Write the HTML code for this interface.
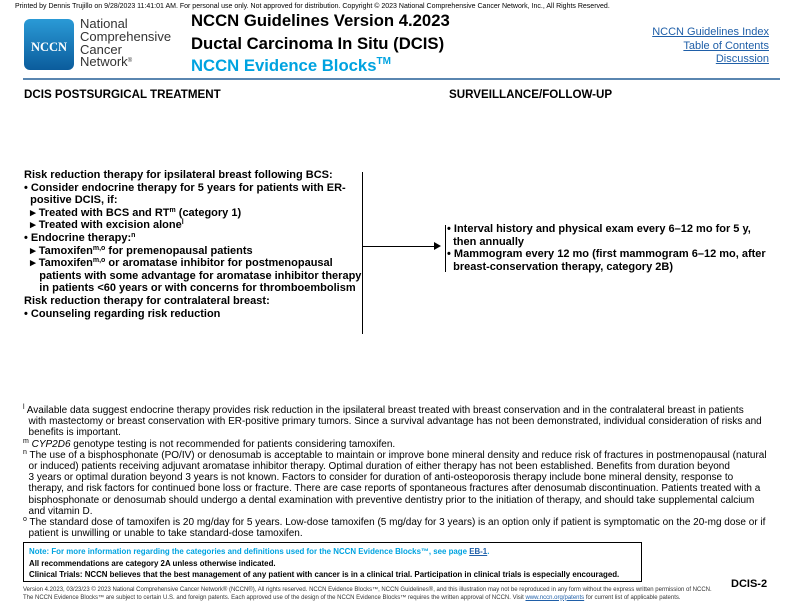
<!DOCTYPE html>
<html><head><meta charset="utf-8"><style>
body{margin:0;width:792px;height:612px;position:relative;background:#fff;font-family:"Liberation Sans",Arial,sans-serif;color:#000;overflow:hidden}
.a{position:absolute;white-space:nowrap}
sup{font-size:7px;vertical-align:4px;line-height:0}
.b{font-weight:bold}
.blk{font-size:11px;font-weight:bold;line-height:12.6px}
.fn{font-size:10px;line-height:11.2px}
a{color:#1f5fa8;text-decoration:underline}
</style></head><body>
<div class="a" style="left:15px;top:3px;font-size:7px">Printed by Dennis Trujillo on 9/28/2023 11:41:01 AM. For personal use only. Not approved for distribution. Copyright © 2023 National Comprehensive Cancer Network, Inc., All Rights Reserved.</div>
<div class="a" style="left:24px;top:19px;width:50px;height:51px;border-radius:6px;background:linear-gradient(#2a9ad6,#0b5c9c)"></div>
<div class="a" style="left:24px;top:40px;width:50px;text-align:center;color:#fff;font-family:'Liberation Serif',serif;font-weight:bold;font-size:12.5px">NCCN</div>
<div class="a" style="left:80px;top:18px;font-size:13px;line-height:12.8px;color:#333">National<br>Comprehensive<br>Cancer<br>Network<sup style="font-size:6px">®</sup></div>
<div class="a b" style="left:191px;top:11px;font-size:16.7px">NCCN Guidelines Version 4.2023</div>
<div class="a b" style="left:191px;top:34px;font-size:16.7px">Ductal Carcinoma In Situ (DCIS)</div>
<div class="a b" style="left:191px;top:56px;font-size:16.7px;color:#00a3e0">NCCN Evidence Blocks<sup style="font-size:10px;vertical-align:7px">TM</sup></div>
<div class="a" style="right:23px;top:26px;font-size:11px;line-height:13.5px;text-align:right"><a>NCCN Guidelines Index</a><br><a>Table of Contents</a><br><a>Discussion</a></div>
<div class="a" style="left:23px;top:78px;width:757px;height:2px;background:#5a86b0"></div>
<div class="a b" style="left:24px;top:88px;font-size:11.6px">DCIS POSTSURGICAL TREATMENT</div>
<div class="a b" style="left:449px;top:88px;font-size:11.6px">SURVEILLANCE/FOLLOW-UP</div>
<div class="a blk" style="left:24px;top:169px">Risk reduction therapy for ipsilateral breast following BCS:<br>• Consider endocrine therapy for 5 years for patients with ER-<br>&nbsp;&nbsp;positive DCIS, if:<br>&nbsp;&nbsp;▸ Treated with BCS and RT<sup>m</sup> (category 1)<br>&nbsp;&nbsp;▸ Treated with excision alone<sup>l</sup><br>• Endocrine therapy:<sup>n</sup><br>&nbsp;&nbsp;▸ Tamoxifen<sup>m,o</sup> for premenopausal patients<br>&nbsp;&nbsp;▸ Tamoxifen<sup>m,o</sup> or aromatase inhibitor for postmenopausal<br>&nbsp;&nbsp;&nbsp;&nbsp;&nbsp;patients with some advantage for aromatase inhibitor therapy<br>&nbsp;&nbsp;&nbsp;&nbsp;&nbsp;in patients &lt;60 years or with concerns for thromboembolism<br>Risk reduction therapy for contralateral breast:<br>• Counseling regarding risk reduction</div>
<div class="a" style="left:362px;top:172px;width:1px;height:162px;background:#000"></div>
<div class="a" style="left:363px;top:246px;width:74px;height:1px;background:#000"></div>
<div class="a" style="left:434px;top:242px;width:0;height:0;border-left:7px solid #000;border-top:4px solid transparent;border-bottom:4px solid transparent"></div>
<div class="a" style="left:445px;top:225px;width:1px;height:47px;background:#000"></div>
<div class="a blk" style="left:447px;top:223px">• Interval history and physical exam every 6–12 mo for 5 y,<br>&nbsp;&nbsp;then annually<br>• Mammogram every 12 mo (first mammogram 6–12 mo, after<br>&nbsp;&nbsp;breast-conservation therapy, category 2B)</div>
<div class="a fn" style="left:23px;top:405px">
<sup>l</sup> Available data suggest endocrine therapy provides risk reduction in the ipsilateral breast treated with breast conservation and in the contralateral breast in patients<br>&nbsp;&nbsp;with mastectomy or breast conservation with ER-positive primary tumors. Since a survival advantage has not been demonstrated, individual consideration of risks and<br>&nbsp;&nbsp;benefits is important.<br>
<sup>m</sup> <i>CYP2D6</i> genotype testing is not recommended for patients considering tamoxifen.<br>
<sup>n</sup> The use of a bisphosphonate (PO/IV) or denosumab is acceptable to maintain or improve bone mineral density and reduce risk of fractures in postmenopausal (natural<br>&nbsp;&nbsp;or induced) patients receiving adjuvant aromatase inhibitor therapy. Optimal duration of either therapy has not been established. Benefits from duration beyond<br>&nbsp;&nbsp;3 years or optimal duration beyond 3 years is not known. Factors to consider for duration of anti-osteoporosis therapy include bone mineral density, response to<br>&nbsp;&nbsp;therapy, and risk factors for continued bone loss or fracture. There are case reports of spontaneous fractures after denosumab discontinuation. Patients treated with a<br>&nbsp;&nbsp;bisphosphonate or denosumab should undergo a dental examination with preventive dentistry prior to the initiation of therapy, and should take supplemental calcium<br>&nbsp;&nbsp;and vitamin D.<br>
<sup>o</sup> The standard dose of tamoxifen is 20 mg/day for 5 years. Low-dose tamoxifen (5 mg/day for 3 years) is an option only if patient is symptomatic on the 20-mg dose or if<br>&nbsp;&nbsp;patient is unwilling or unable to take standard-dose tamoxifen.</div>
<div class="a" style="left:23px;top:542px;width:617px;height:38px;border:1px solid #000"></div>
<div class="a b" style="left:29px;top:546px;font-size:7.9px;line-height:11.5px"><span style="color:#00a3e0">Note: For more information regarding the categories and definitions used for the NCCN Evidence Blocks™, see page <a>EB-1</a>.</span><br>All recommendations are category 2A unless otherwise indicated.<br>Clinical Trials: NCCN believes that the best management of any patient with cancer is in a clinical trial. Participation in clinical trials is especially encouraged.</div>
<div class="a b" style="left:731px;top:578px;font-size:11px">DCIS-2</div>
<div class="a" style="left:23px;top:587px;font-size:6px;line-height:7.5px;color:#333">Version 4.2023, 03/23/23 © 2023 National Comprehensive Cancer Network® (NCCN®), All rights reserved. NCCN Evidence Blocks™, NCCN Guidelines®, and this illustration may not be reproduced in any form without the express written permission of NCCN.<br>The NCCN Evidence Blocks™ are subject to certain U.S. and foreign patents. Each approved use of the design of the NCCN Evidence Blocks™ requires the written approval of NCCN. Visit <a>www.nccn.org/patents</a> for current list of applicable patents.</div>
</body></html>
